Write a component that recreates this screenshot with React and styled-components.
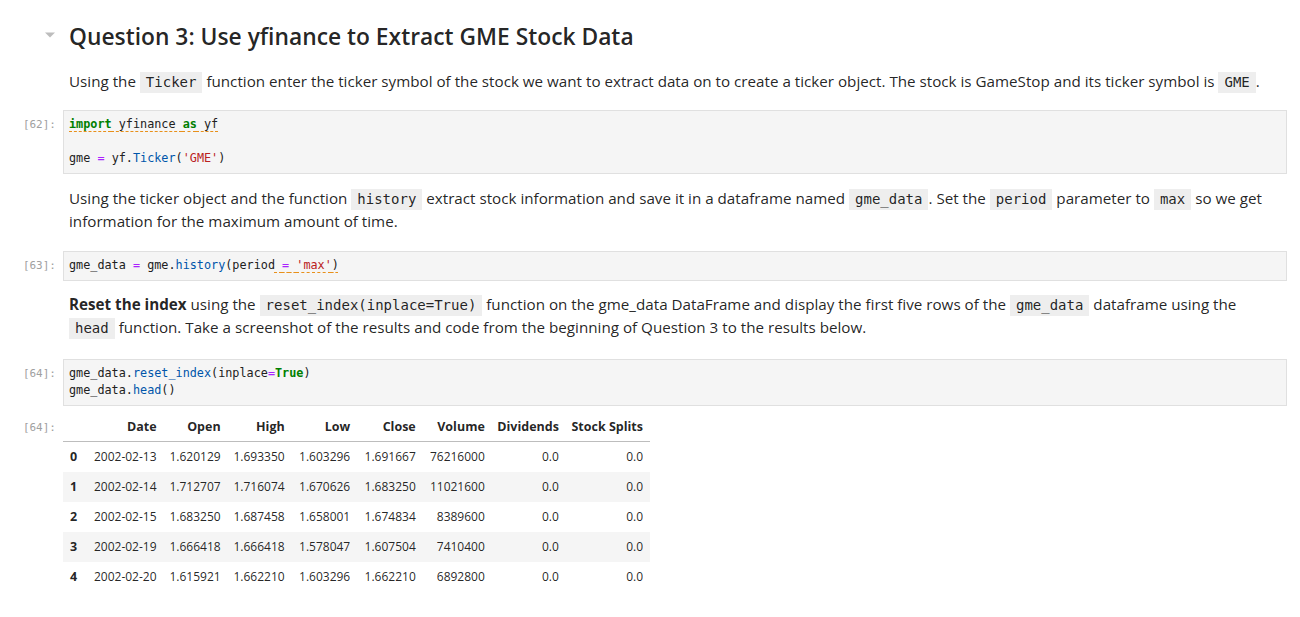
import React from "react";
import styled, { createGlobalStyle } from "styled-components";

const GlobalStyle = createGlobalStyle`
  body {
    margin: 0;
    background: #ffffff;
    color: rgba(0, 0, 0, 0.87);
    font-family: "Open Sans", "Noto Sans", sans-serif;
  }
`;

const Notebook = styled.div`
  display: flex;
  flex-direction: column;
  padding: 22px 13px 30px 0;
`;

const Cell = styled.div`
  display: grid;
  grid-template-columns: 63px 1fr;
  margin-top: ${(p) => p.$mt || 0}px;
`;

const Prompt = styled.div`
  font-family: "DejaVu Sans Mono", monospace;
  font-size: 11px;
  color: #a0a0a0;
  text-align: right;
  padding-right: 7px;
  line-height: 17px;
  padding-top: ${(p) => p.$top || 6}px;
`;

const CaretBox = styled.div`
  display: flex;
  justify-content: flex-end;
  align-items: center;
  padding-right: 8px;
  height: 26px;
`;

const Heading = styled.h2`
  margin: 0 0 6px;
  padding-left: 6px;
  font-size: 22.8px;
  line-height: 30px;
  font-weight: 600;
  color: rgba(0, 0, 0, 0.87);
`;

const Para = styled.p`
  margin: 0;
  padding: 0 15px 0 6px;
  font-size: 15.2px;
  line-height: 23.5px;
`;

const Code = styled.code`
  display: inline-block;
  font-family: "DejaVu Sans Mono", monospace;
  font-size: 14px;
  line-height: 21px;
  background: #eeeeee;
  padding: 0 6px;
`;

const Editor = styled.div`
  background: #f5f5f5;
  border: 1px solid #e0e0e0;
  padding: 5px 5px 6px;
  font-family: "DejaVu Sans Mono", monospace;
  font-size: 11.8px;
  line-height: 17px;
  color: #212121;
  white-space: pre;
`;

const Line = styled.div`
  height: 17px;
`;

const Kw = styled.span`
  color: #008000;
  font-weight: ${(p) => (p.$bold ? 700 : 400)};
`;
const Op = styled.span`
  color: #aa22ff;
`;
const Prop = styled.span`
  color: #0055aa;
`;
const Str = styled.span`
  color: #ba2121;
`;
const Lint = styled.span`
  text-decoration: underline dashed #e8901a;
  text-decoration-thickness: 1px;
  text-underline-offset: 3px;
`;

const Table = styled.table`
  border-collapse: collapse;
  table-layout: fixed;
  width: 587px;
  font-size: 12px;
  color: rgba(0, 0, 0, 0.87);
`;

const Th = styled.th`
  text-align: right;
  font-weight: 700;
  font-size: 12.5px;
  height: 29px;
  padding: 0 7px 0 0;
  border-bottom: 1px solid #bdbdbd;
  white-space: nowrap;
`;

const Row = styled.tr`
  background: ${(p) => (p.$odd ? "#f5f5f5" : "transparent")};
`;

const Td = styled.td`
  text-align: right;
  height: 30px;
  padding: 0 7px 0 0;
  font-weight: ${(p) => (p.$head ? 700 : 400)};
  white-space: nowrap;
`;

const IndexTd = styled(Td)`
  text-align: left;
  padding-left: 7px;
  font-size: 12.5px;
`;

const widths = [19, 81.5, 64, 64, 65.5, 65.5, 69, 74, 84];
const columns = ["Date", "Open", "High", "Low", "Close", "Volume", "Dividends", "Stock Splits"];
const rows = [
  ["2002-02-13", "1.620129", "1.693350", "1.603296", "1.691667", "76216000", "0.0", "0.0"],
  ["2002-02-14", "1.712707", "1.716074", "1.670626", "1.683250", "11021600", "0.0", "0.0"],
  ["2002-02-15", "1.683250", "1.687458", "1.658001", "1.674834", "8389600", "0.0", "0.0"],
  ["2002-02-19", "1.666418", "1.666418", "1.578047", "1.607504", "7410400", "0.0", "0.0"],
  ["2002-02-20", "1.615921", "1.662210", "1.603296", "1.662210", "6892800", "0.0", "0.0"],
];

const Caret = () => (
  <svg width="10" height="6" viewBox="0 0 10 6">
    <path d="M0 0.5 L10 0.5 L5 5.5 Z" fill="#bdbdbd" />
  </svg>
);

export default function App() {
  return (
    <>
      <GlobalStyle />
      <Notebook>
        <Cell>
          <CaretBox>
            <Caret />
          </CaretBox>
          <Heading>Question 3: Use yfinance to Extract GME Stock Data</Heading>
        </Cell>

        <Cell $mt={12}>
          <div />
          <Para>
            Using the <Code>Ticker</Code> function enter the ticker symbol of the stock we want to
            extract data on to create a ticker object. The stock is GameStop and its ticker symbol
            is <Code>GME</Code>.
          </Para>
        </Cell>

        <Cell $mt={16}>
          <Prompt>[62]:</Prompt>
          <Editor>
            <Line>
              <Lint>
                <Kw $bold>import</Kw> yfinance <Kw $bold>as</Kw> yf
              </Lint>
            </Line>
            <Line />
            <Line>
              gme <Op>=</Op> yf.<Prop>Ticker</Prop>(<Str>'GME'</Str>)
            </Line>
          </Editor>
        </Cell>

        <Cell $mt={13}>
          <div />
          <Para>
            Using the ticker object and the function <Code>history</Code> extract stock information
            and save it in a dataframe named <Code>gme_data</Code>. Set the <Code>period</Code>{" "}
            parameter to <Code>max</Code> so we get information for the maximum amount of time.
          </Para>
        </Cell>

        <Cell $mt={17}>
          <Prompt>[63]:</Prompt>
          <Editor>
            <Line>
              gme_data <Op>=</Op> gme.<Prop>history</Prop>(period
              <Lint>
                {" "}
                <Op>=</Op> <Str>'max'</Str>)
              </Lint>
            </Line>
          </Editor>
        </Cell>

        <Cell $mt={12}>
          <div />
          <Para>
            <b>Reset the index</b> using the <Code>reset_index(inplace=True)</Code> function on the
            gme_data DataFrame and display the first five rows of the <Code>gme_data</Code> dataframe
            using the <Code>head</Code> function. Take a screenshot of the results and code from the
            beginning of Question 3 to the results below.
          </Para>
        </Cell>

        <Cell $mt={19}>
          <Prompt>[64]:</Prompt>
          <Editor>
            <Line>
              gme_data.<Prop>reset_index</Prop>(inplace<Op>=</Op>
              <Kw $bold>True</Kw>)
            </Line>
            <Line>
              gme_data.<Prop>head</Prop>()
            </Line>
          </Editor>
        </Cell>

        <Cell $mt={6}>
          <Prompt $top={7}>[64]:</Prompt>
          <div>
            <Table>
              <colgroup>
                {widths.map((w, i) => (
                  <col key={i} style={{ width: w }} />
                ))}
              </colgroup>
              <thead>
                <tr>
                  <Th />
                  {columns.map((c) => (
                    <Th key={c}>{c}</Th>
                  ))}
                </tr>
              </thead>
              <tbody>
                {rows.map((r, i) => (
                  <Row key={i} $odd={i % 2 === 1}>
                    <IndexTd $head>{i}</IndexTd>
                    {r.map((v, j) => (
                      <Td key={j}>{v}</Td>
                    ))}
                  </Row>
                ))}
              </tbody>
            </Table>
          </div>
        </Cell>
      </Notebook>
    </>
  );
}
